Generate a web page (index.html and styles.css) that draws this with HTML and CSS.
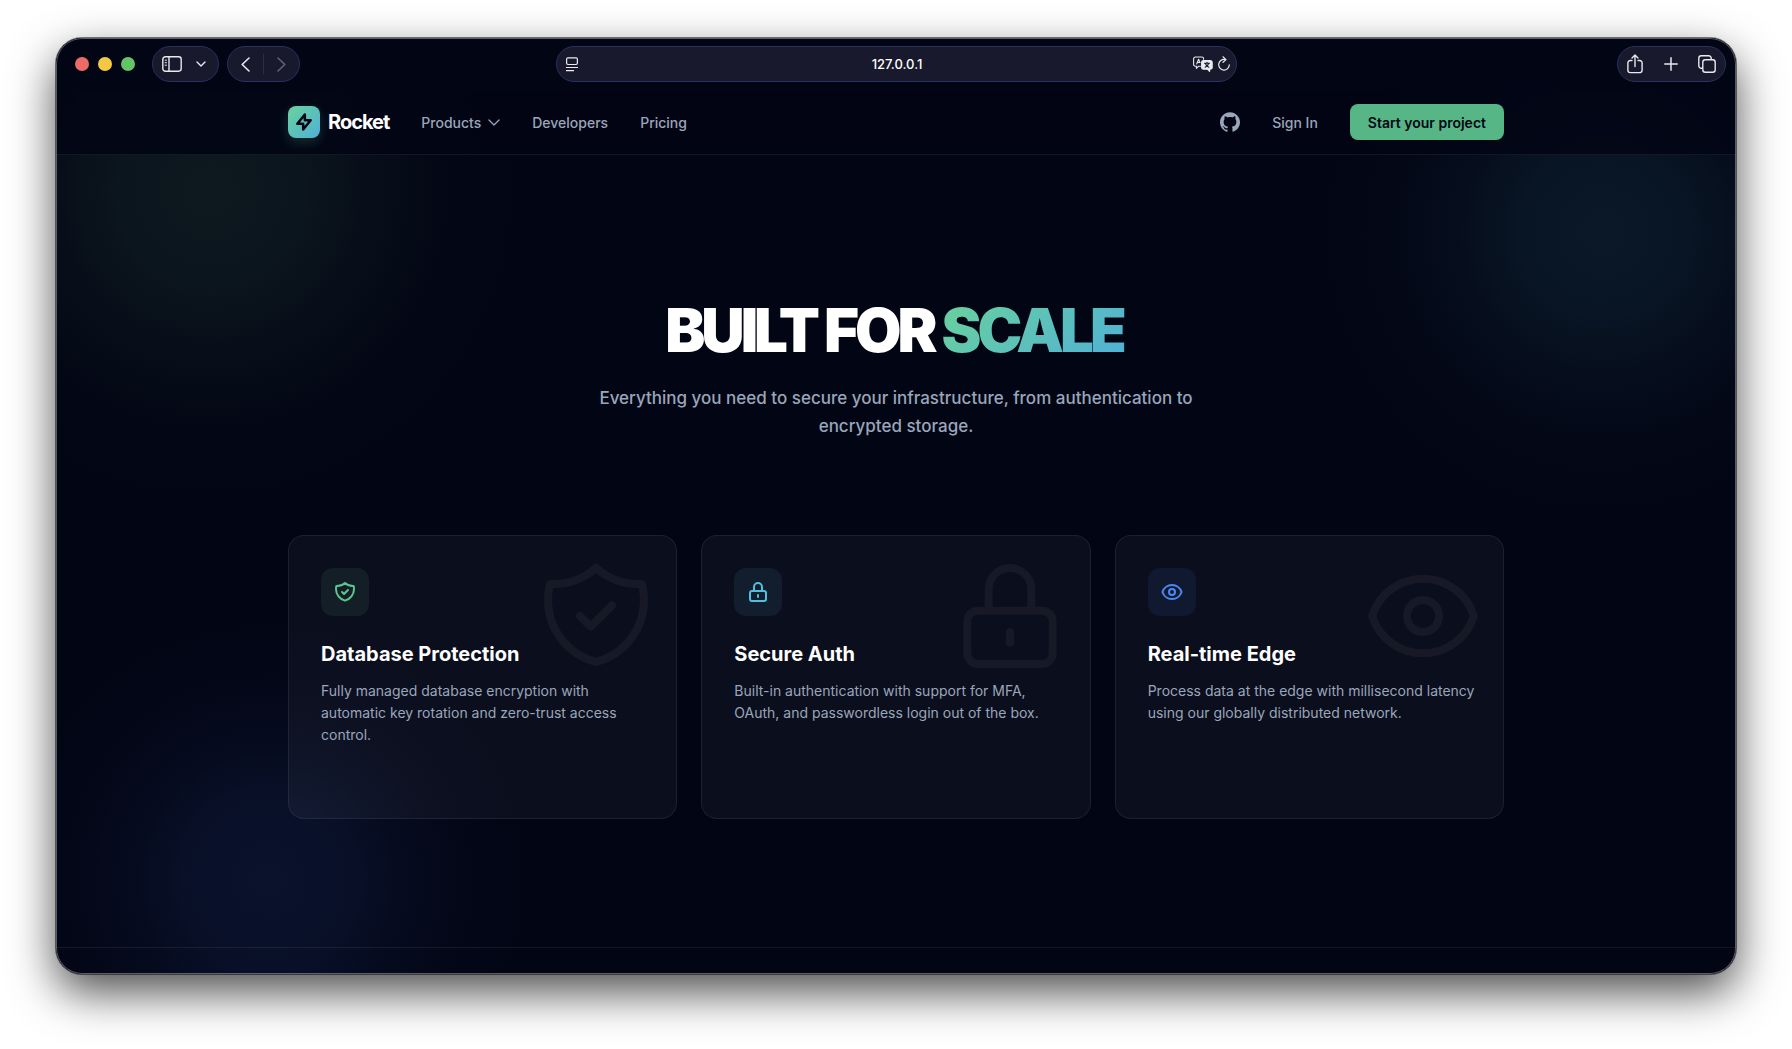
FILE: index.html
```html
<!DOCTYPE html>
<html lang="en">
<head>
  <meta charset="UTF-8" />
  <meta name="viewport" content="width=device-width, initial-scale=1.0"/>
  <title>Rocket</title>
  <link rel="stylesheet" href="styles.css">
</head>
<body>
  <div class="window">
    <div class="glow glow-green"></div>
    <div class="glow glow-cyan"></div>
    <div class="glow glow-blue"></div>

    <!-- browser toolbar -->
    <div class="toolbar">
      <div class="toolbar-left">
        <div class="lights">
          <span class="light red"></span>
          <span class="light yellow"></span>
          <span class="light green"></span>
        </div>
        <div class="pill pill-sidebar">
          <button aria-label="Sidebar">
            <svg width="20" height="16" viewBox="0 0 20 16" fill="none" stroke="currentColor" stroke-width="1.4"><rect x="0.8" y="0.8" width="18.4" height="14.4" rx="2.6"/><path d="M7 1v14"/><path d="M2.7 4.2h2.2M2.7 6.7h2.2M2.7 9.2h2.2" stroke-width="1"/></svg>
          </button>
          <button aria-label="Tab groups">
            <svg width="10" height="6" viewBox="0 0 10 6" fill="none" stroke="currentColor" stroke-width="1.4" stroke-linecap="round" stroke-linejoin="round"><path d="M1 1l4 4 4-4"/></svg>
          </button>
        </div>
        <div class="pill pill-history">
          <button aria-label="Back">
            <svg width="9" height="15" viewBox="0 0 9 15" fill="none" stroke="currentColor" stroke-width="1.6" stroke-linecap="round" stroke-linejoin="round"><path d="M8 1L1.2 7.5 8 14"/></svg>
          </button>
          <span class="divider"></span>
          <button aria-label="Forward" disabled>
            <svg width="9" height="15" viewBox="0 0 9 15" fill="none" stroke="currentColor" stroke-width="1.6" stroke-linecap="round" stroke-linejoin="round"><path d="M1 1l6.8 6.5L1 14"/></svg>
          </button>
        </div>
      </div>

      <div class="pill address">
        <svg width="12" height="15" viewBox="0 0 12 15" fill="none" stroke="currentColor" stroke-width="1.2"><rect x="0.6" y="0.9" width="10.8" height="6.6" rx="1.4"/><path d="M0 10.5h12M0 13.6h8"/></svg>
        <input type="text" value="127.0.0.1" aria-label="Address" />
        <div class="address-actions">
          <button aria-label="Translate">
            <svg width="20" height="16" viewBox="0 0 20 16" fill="none" stroke="currentColor" stroke-width="1.1" stroke-linejoin="round" stroke-linecap="round"><path d="M7.4 10.2H5.6L3.4 12.4V10.2H2.4A1.8 1.8 0 0 1 .6 8.4V2.8A1.8 1.8 0 0 1 2.4 1H8.8A1.8 1.8 0 0 1 10.6 2.8V3.2"/><path d="M3.7 8L5.6 3.2 7 6.6M4.4 6.5h2"/><path d="M10.4 4.6h7a1.8 1.8 0 0 1 1.8 1.8v5a1.8 1.8 0 0 1-1.8 1.8h-.8v2.2l-2.3-2.2h-3.9a1.8 1.8 0 0 1-1.8-1.8v-5a1.8 1.8 0 0 1 1.8-1.8z" fill="currentColor"/><path class="cutout" d="M11.5 7.3h5M14 6.3v1M15.6 7.5c-.5 1.7-1.7 3-3.4 3.8M12.4 7.5c.5 1.7 1.7 3 3.4 3.8"/></svg>
          </button>
          <button aria-label="Reload">
            <svg width="12" height="16" viewBox="0 0 12 16" fill="none" stroke="currentColor" stroke-width="1.2" stroke-linecap="round" stroke-linejoin="round"><path d="M6.8 3.5A5.3 5.3 0 1 0 11.3 8.8"/><path d="M5 .8l3 2.8-3 2.7"/></svg>
          </button>
        </div>
      </div>

      <div class="toolbar-right">
        <div class="pill pill-actions">
          <button aria-label="Share">
            <svg width="16" height="20" viewBox="0 0 16 20" fill="none" stroke="currentColor" stroke-width="1.4" stroke-linecap="round" stroke-linejoin="round"><path d="M5 6.5H3.2A2.3 2.3 0 0 0 .9 8.8v7.5a2.3 2.3 0 0 0 2.3 2.3h9.6a2.3 2.3 0 0 0 2.3-2.3V8.8a2.3 2.3 0 0 0-2.3-2.3H11"/><path d="M8 12.5V1M5 3.9L8 1l3 2.9"/></svg>
          </button>
          <button aria-label="New tab">
            <svg width="14" height="14" viewBox="0 0 14 14" fill="none" stroke="currentColor" stroke-width="1.5" stroke-linecap="round"><path d="M7 .8v12.4M.8 7h12.4"/></svg>
          </button>
          <button aria-label="Show tabs">
            <svg width="18" height="18" viewBox="0 0 18 18" fill="none" stroke="currentColor" stroke-width="1.4" stroke-linejoin="round"><rect x="4.8" y="4.8" width="12.4" height="12.4" rx="2.5"/><path d="M4.8 13.2H3.3A2.5 2.5 0 0 1 .8 10.7V3.3A2.5 2.5 0 0 1 3.3.8h7.4a2.5 2.5 0 0 1 2.5 2.5v1.5"/></svg>
          </button>
        </div>
      </div>
    </div>

    <nav>
      <div class="container nav-row">
        <a href="#" class="brand">
          <span class="logo">
            <svg width="20" height="20" viewBox="0 0 24 24" fill="none" stroke="currentColor" stroke-width="3" stroke-linecap="round" stroke-linejoin="round"><path d="M13 10V3L4 14h7v7l9-11h-7z"/></svg>
          </span>
          Rocket
        </a>
        <a href="#" class="link">Products
          <svg width="12" height="7" viewBox="0 0 12 7" fill="none" stroke="currentColor" stroke-width="1.3" stroke-linecap="round" stroke-linejoin="round"><path d="M1 1l5 5 5-5"/></svg>
        </a>
        <a href="#" class="link">Developers</a>
        <a href="#" class="link">Pricing</a>
        <div class="nav-right">
          <a href="#" class="link" aria-label="GitHub">
            <svg width="20" height="20" viewBox="0 0 24 24" fill="currentColor"><path d="M12 .297c-6.63 0-12 5.373-12 12 0 5.303 3.438 9.8 8.205 11.385.6.113.82-.258.82-.577 0-.285-.01-1.04-.015-2.04-3.338.724-4.042-1.61-4.042-1.61C4.422 18.07 3.633 17.7 3.633 17.7c-1.087-.744.084-.729.084-.729 1.205.084 1.838 1.236 1.838 1.236 1.07 1.835 2.809 1.305 3.495.998.108-.776.417-1.305.76-1.605-2.665-.3-5.466-1.332-5.466-5.93 0-1.31.465-2.38 1.235-3.22-.135-.303-.54-1.523.105-3.176 0 0 1.005-.322 3.3 1.23.96-.267 1.98-.399 3-.405 1.02.006 2.04.138 3 .405 2.28-1.552 3.285-1.23 3.285-1.23.645 1.653.24 2.873.12 3.176.765.84 1.23 1.91 1.23 3.22 0 4.61-2.805 5.625-5.475 5.92.42.36.81 1.096.81 2.22 0 1.606-.015 2.896-.015 3.286 0 .315.21.69.825.57C20.565 22.092 24 17.592 24 12.297c0-6.627-5.373-12-12-12"/></svg>
          </a>
          <a href="#" class="link">Sign In</a>
          <button class="cta">Start your project</button>
        </div>
      </div>
    </nav>

    <main class="container">
      <section class="hero">
        <h1>BUILT FOR <span>SCALE</span></h1>
        <p>Everything you need to secure your infrastructure, from authentication to encrypted storage.</p>
      </section>

      <section class="cards">
        <article class="card">
          <svg class="card-art" viewBox="0 0 24 24"><path d="M9 12l2 2 4-4m5.618-4.016A11.955 11.955 0 0112 2.944a11.955 11.955 0 01-8.618 3.04A12.02 12.02 0 003 9c0 5.591 3.824 10.29 9 11.622 5.176-1.332 9-6.03 9-11.622 0-1.042-.133-2.052-.382-3.016z"/></svg>
          <div class="card-icon emerald">
            <svg viewBox="0 0 24 24"><path d="M9 12l2 2 4-4m5.618-4.016A11.955 11.955 0 0112 2.944a11.955 11.955 0 01-8.618 3.04A12.02 12.02 0 003 9c0 5.591 3.824 10.29 9 11.622 5.176-1.332 9-6.03 9-11.622 0-1.042-.133-2.052-.382-3.016z"/></svg>
          </div>
          <h3>Database Protection</h3>
          <p>Fully managed database encryption with automatic key rotation and zero-trust access control.</p>
        </article>

        <article class="card">
          <svg class="card-art" viewBox="0 0 24 24"><path d="M12 15v2m-6 4h12a2 2 0 002-2v-6a2 2 0 00-2-2H6a2 2 0 00-2 2v6a2 2 0 002 2zm10-10V7a4 4 0 00-8 0v4h8z"/></svg>
          <div class="card-icon cyan">
            <svg viewBox="0 0 24 24"><path d="M12 15v2m-6 4h12a2 2 0 002-2v-6a2 2 0 00-2-2H6a2 2 0 00-2 2v6a2 2 0 002 2zm10-10V7a4 4 0 00-8 0v4h8z"/></svg>
          </div>
          <h3>Secure Auth</h3>
          <p>Built-in authentication with support for MFA, OAuth, and passwordless login out of the box.</p>
        </article>

        <article class="card">
          <svg class="card-art" viewBox="0 0 24 24"><path d="M15 12a3 3 0 11-6 0 3 3 0 016 0z"/><path d="M2.458 12C3.732 7.943 7.523 5 12 5c4.478 0 8.268 2.943 9.542 7-1.274 4.057-5.064 7-9.542 7-4.477 0-8.268-2.943-9.542-7z"/></svg>
          <div class="card-icon blue">
            <svg viewBox="0 0 24 24"><path d="M15 12a3 3 0 11-6 0 3 3 0 016 0z"/><path d="M2.458 12C3.732 7.943 7.523 5 12 5c4.478 0 8.268 2.943 9.542 7-1.274 4.057-5.064 7-9.542 7-4.477 0-8.268-2.943-9.542-7z"/></svg>
          </div>
          <h3>Real-time Edge</h3>
          <p>Process data at the edge with millisecond latency using our globally distributed network.</p>
        </article>
      </section>
    </main>

    <footer></footer>
  </div>
</body>
</html>
```
FILE: styles.css
```css
:root {
  --bg: #020514;
  --muted: #9aa6ba;
  --line: rgba(255, 255, 255, 0.07);
  --pill: #18192c;
  --pill-line: #2b3060;
  --emerald: #6ad29b;
  --sky: #4fb0d8;
}
* {
  box-sizing: border-box;
}
body {
  margin: 0;
  min-height: 100vh;
  padding: 38px 56px 75px;
  display: flex;
  background: #fff;
  font-family: Inter, "Liberation Sans", sans-serif;
  color: #fff;
}
a {
  color: inherit;
  text-decoration: none;
}
button {
  display: flex;
  align-items: center;
  padding: 0;
  border: none;
  background: none;
  color: inherit;
  font-family: inherit;
  cursor: pointer;
}
svg {
  display: block;
  flex: none;
}
.window {
  position: relative;
  flex: 1;
  display: flex;
  flex-direction: column;
  border-radius: 26px;
  background: var(--bg);
  overflow: hidden;
  isolation: isolate;
  box-shadow: 0 0 0 1px rgba(0, 0, 0, 0.5), 0 18px 46px rgba(0, 0, 0, 0.7);
}
.window::after {
  content: "";
  position: absolute;
  inset: 0;
  border: 1px solid rgba(255, 255, 255, 0.35);
  border-radius: 26px;
  pointer-events: none;
}

/* background glows */
.glow {
  position: absolute;
  z-index: -1;
  border-radius: 50%;
}
.glow-green {
  width: 620px;
  height: 620px;
  left: -156px;
  top: -158px;
  background: radial-gradient(closest-side, rgb(13, 24, 31), rgba(13, 24, 31, 0.85) 30%, rgba(13, 24, 31, 0.45) 52%, rgba(13, 24, 31, 0.15) 75%, rgba(13, 24, 31, 0));
}
.glow-cyan {
  width: 560px;
  height: 560px;
  right: -147px;
  top: -86px;
  background: radial-gradient(closest-side, rgb(10, 24, 39), rgba(10, 24, 39, 0.85) 30%, rgba(10, 24, 39, 0.45) 52%, rgba(10, 24, 39, 0.15) 75%, rgba(10, 24, 39, 0));
}
.glow-blue {
  width: 520px;
  height: 520px;
  left: -48px;
  bottom: -166px;
  background: radial-gradient(closest-side, rgb(10, 18, 44), rgba(10, 18, 44, 0.85) 30%, rgba(10, 18, 44, 0.45) 52%, rgba(10, 18, 44, 0.15) 75%, rgba(10, 18, 44, 0));
}

/* toolbar */
.toolbar {
  display: grid;
  grid-template-columns: 1fr 681px 1fr;
  align-items: center;
  height: 52px;
  padding: 0 10px;
  background: var(--bg);
}
.toolbar-left {
  display: flex;
  align-items: center;
  gap: 8px;
}
.toolbar-right {
  display: flex;
  justify-content: flex-end;
}
.lights {
  display: flex;
  gap: 9px;
  margin: 0 9px;
}
.light {
  width: 14px;
  height: 14px;
  border-radius: 50%;
}
.light.red { background: #ee6a66; }
.light.yellow { background: #f4c842; }
.light.green { background: #64c466; }
.pill {
  display: flex;
  align-items: center;
  height: 36px;
  border: 1px solid var(--pill-line);
  border-radius: 18px;
  background: var(--pill);
  color: #e9e9ef;
}
.pill-sidebar {
  width: 67px;
  gap: 14px;
  padding-left: 9px;
}
.pill-history {
  width: 73px;
  gap: 13px;
  padding-left: 13px;
}
.pill-history button:disabled {
  color: #62636f;
}
.divider {
  width: 1px;
  height: 20px;
  background: #2c2d40;
}
.address {
  padding: 0 6px 0 9px;
  justify-content: space-between;
}
.address input {
  flex: 1;
  min-width: 0;
  padding: 0 0 0 24px;
  border: none;
  outline: none;
  background: none;
  color: #fff;
  font-family: inherit;
  font-size: 13px;
  font-weight: 500;
  text-align: center;
}
.address-actions {
  display: flex;
  gap: 5px;
}
.cutout {
  stroke: var(--pill);
}
.pill-actions {
  width: 109px;
  justify-content: space-between;
  padding: 0 9px;
}

/* nav */
nav {
  border-bottom: 1px solid var(--line);
  background: rgba(2, 5, 20, 0.85);
}
.container {
  width: 100%;
  max-width: 1280px;
  margin: 0 auto;
  padding: 0 32px;
}
.nav-row {
  display: flex;
  align-items: center;
  gap: 32px;
  height: 64px;
}
.brand {
  display: flex;
  align-items: center;
  gap: 8px;
  font-size: 20px;
  font-weight: 700;
  letter-spacing: -0.05em;
}
.logo {
  display: flex;
  align-items: center;
  justify-content: center;
  width: 32px;
  height: 32px;
  border-radius: 8px;
  background: linear-gradient(135deg, var(--emerald), var(--sky));
  color: #020514;
  box-shadow: 0 4px 12px rgba(106, 210, 155, 0.2);
}
.link {
  display: flex;
  align-items: center;
  gap: 7px;
  color: var(--muted);
  font-size: 14px;
  font-weight: 500;
}
.nav-right {
  display: flex;
  align-items: center;
  gap: 32px;
  margin-left: auto;
}
.cta {
  height: 36px;
  padding: 0 18px;
  border-radius: 8px;
  background: #56b686;
  color: #020514;
  font-size: 14px;
  font-weight: 600;
}

/* hero */
main {
  flex: 1;
}
.hero {
  padding: 145px 0 95px;
  text-align: center;
}
.hero h1 {
  margin: 0 0 24px;
  font-size: 60px;
  line-height: 60px;
  font-weight: 900;
  letter-spacing: -4px;
}
.hero h1 span {
  padding-right: 4px;
  background: linear-gradient(135deg, var(--emerald), var(--sky));
  background-clip: text;
  -webkit-background-clip: text;
  color: transparent;
}
.hero p {
  max-width: 672px;
  margin: 0 auto;
  color: var(--muted);
  font-size: 17px;
  line-height: 28px;
  font-weight: 500;
}

/* cards */
.cards {
  display: grid;
  grid-template-columns: repeat(3, 1fr);
  gap: 24px;
}
.card {
  position: relative;
  min-height: 284px;
  padding: 32px 24px 32px 32px;
  border: 1px solid var(--line);
  border-radius: 16px;
  background: rgba(255, 255, 255, 0.04);
}
.card svg {
  fill: none;
  stroke: currentColor;
  stroke-width: 1.5;
  stroke-linecap: round;
  stroke-linejoin: round;
}
.card .card-art {
  position: absolute;
  top: 16px;
  right: 16px;
  width: 128px;
  height: 128px;
  color: #171926;
}
.card-icon {
  display: flex;
  align-items: center;
  justify-content: center;
  width: 48px;
  height: 48px;
  margin-bottom: 24px;
  border-radius: 12px;
}
.card .card-icon svg {
  width: 24px;
  height: 24px;
  stroke-width: 2;
}
.card-icon.emerald {
  background: #131e27;
  color: #5cc690;
}
.card-icon.cyan {
  background: #121d2e;
  color: #50bfdd;
}
.card-icon.blue {
  background: #111931;
  color: #4a8af4;
}
.card h3 {
  position: relative;
  margin: 0 0 12px;
  font-size: 20px;
  line-height: 28px;
  font-weight: 700;
}
.card p {
  margin: 0;
  color: var(--muted);
  font-size: 14px;
  line-height: 22px;
}

footer {
  height: 27px;
  border-top: 1px solid var(--line);
}
```
